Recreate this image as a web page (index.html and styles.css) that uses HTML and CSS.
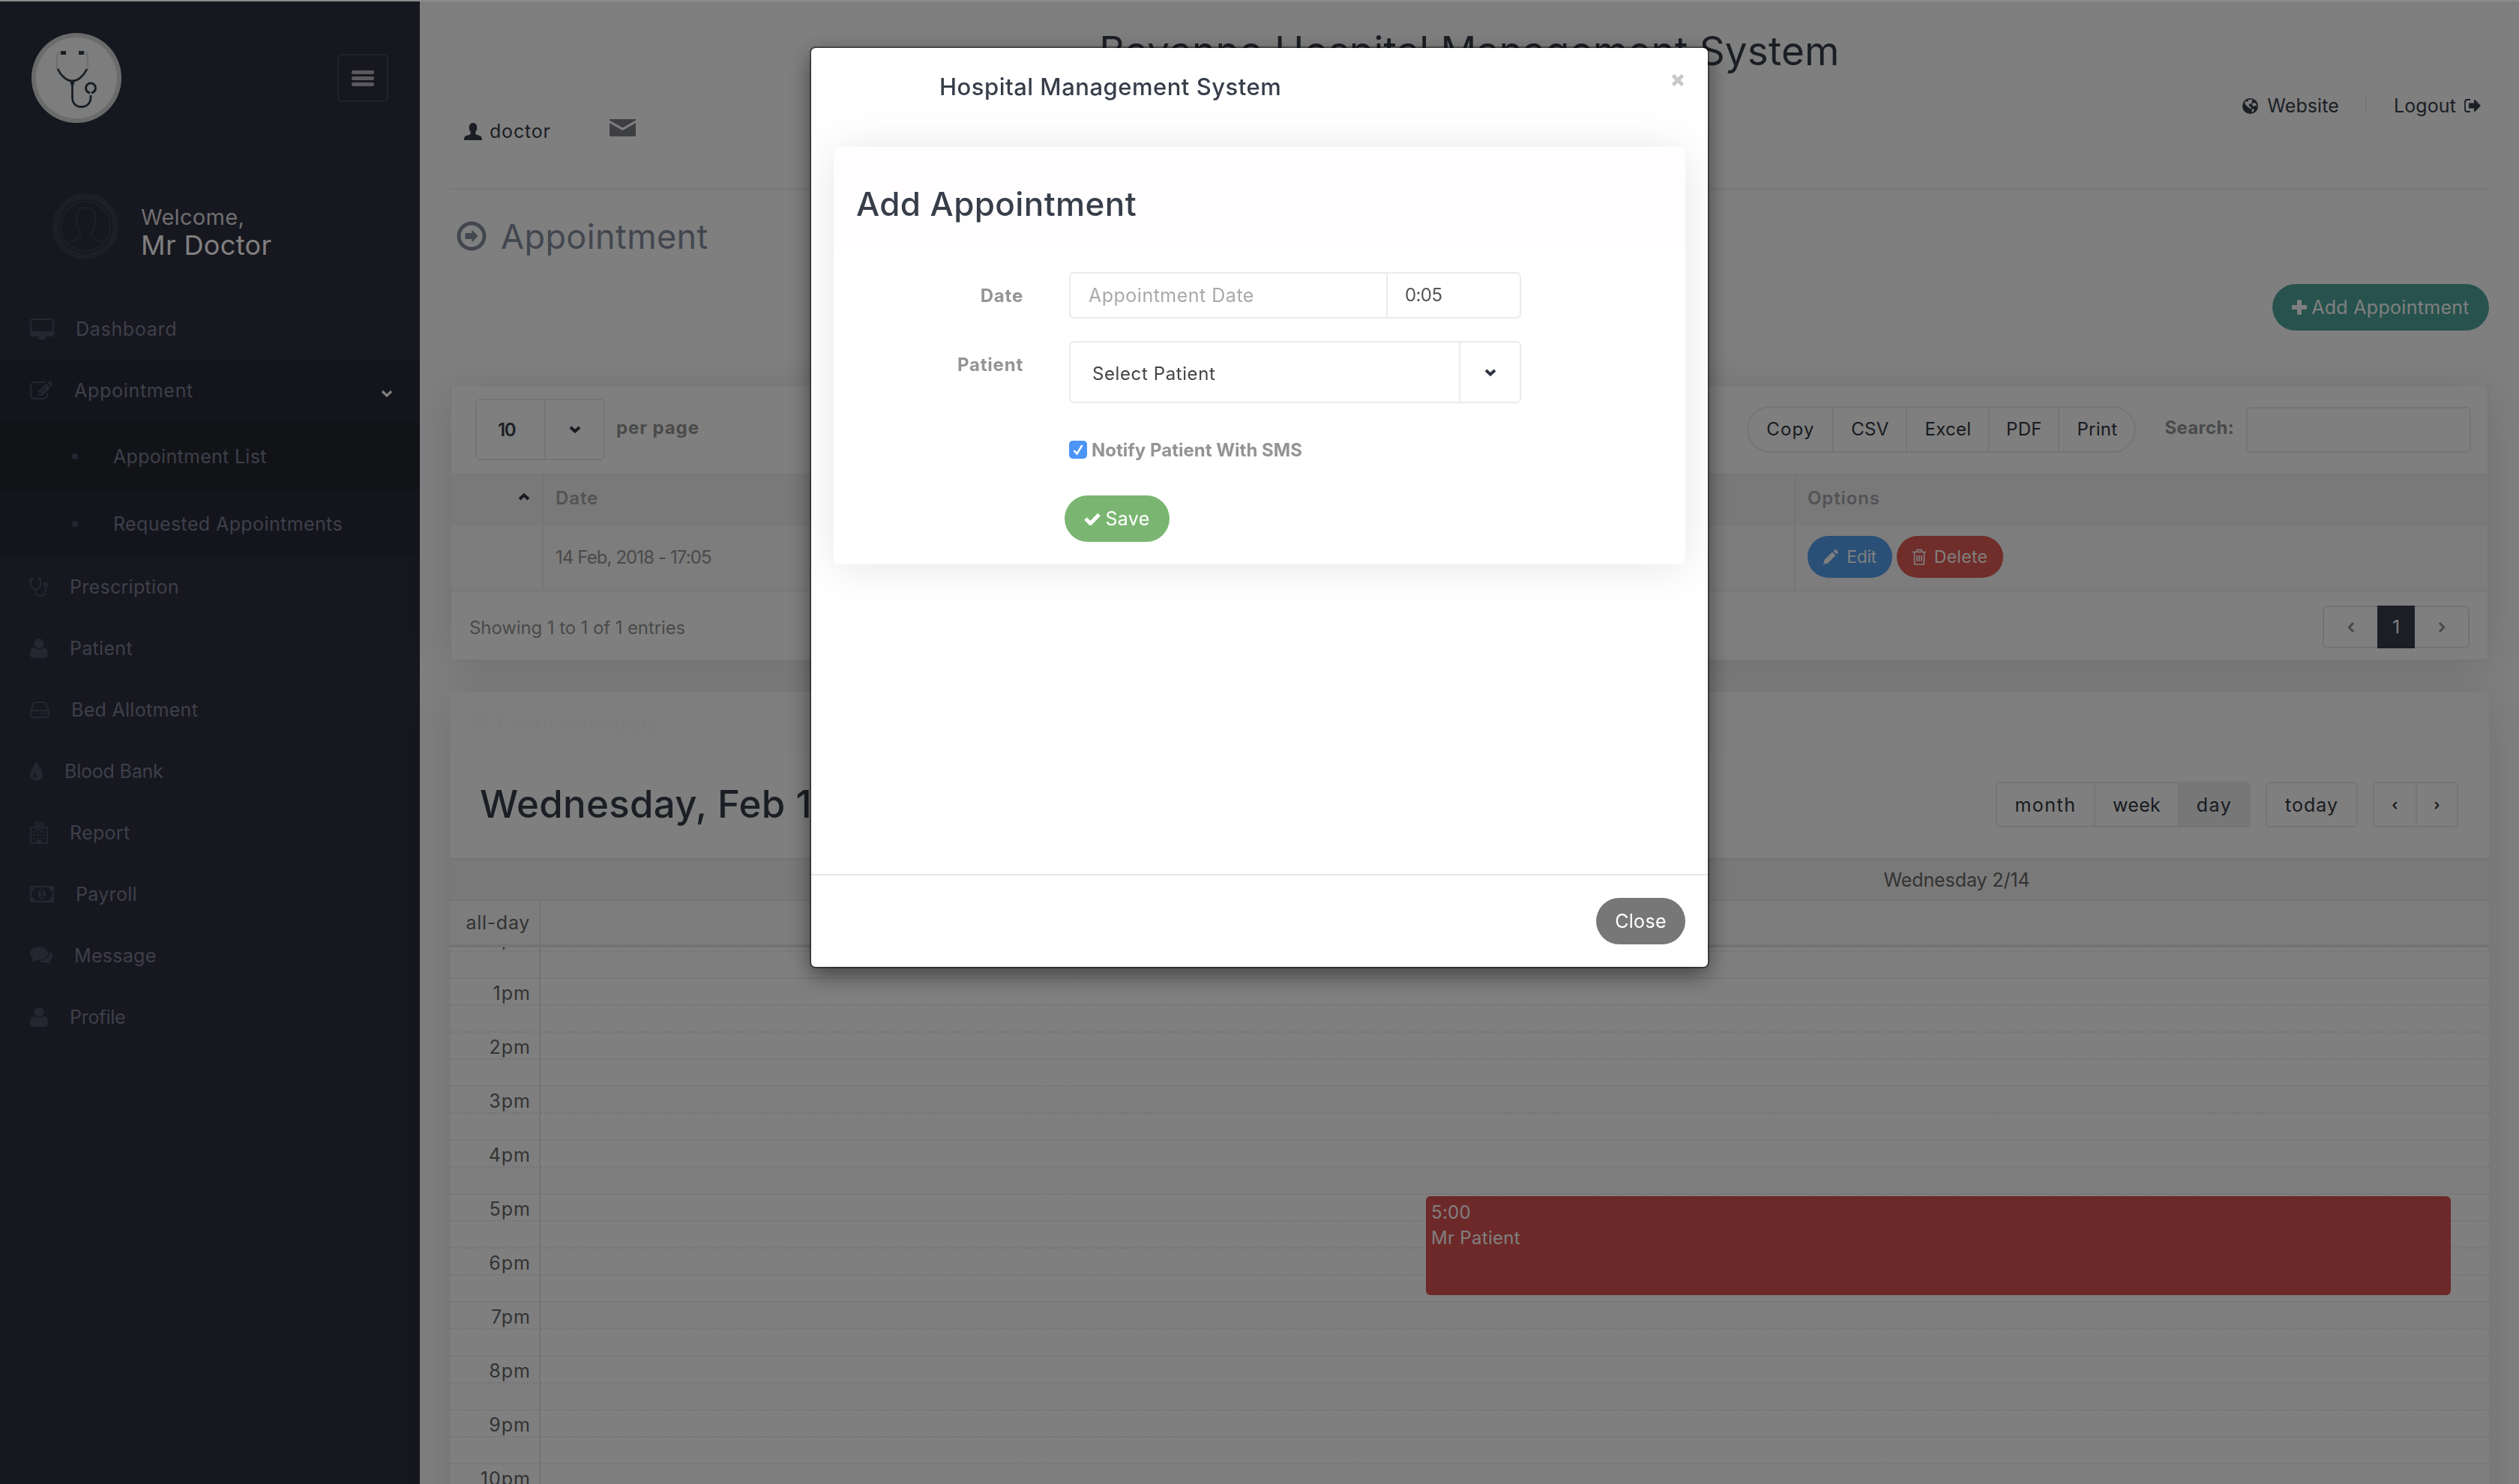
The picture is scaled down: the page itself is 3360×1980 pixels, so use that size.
FILE: index.html
```
<!DOCTYPE html>
<html lang="en">
<head>
 <meta charset="UTF-8">
 <title>Appointment | Bayanno Hospital Management System</title>
 <link rel="stylesheet" href="styles.css">
</head>
<body>
<div class="page">
 <div class="sidebar">
  <div class="logo-env">
   <svg class="logo" width="120" height="120" viewBox="0 0 120 120" fill="none">
    <circle cx="60" cy="60" r="60" fill="#d4d8d6"/>
    <circle cx="60" cy="60" r="54" fill="#fbfbfb"/>
    <path d="M40 26c-4 0-6 3-6 7v15M69 26c4 0 6 3 6 7v15" stroke="#dcdedd" stroke-width="2.4"/>
    <rect x="39" y="24" width="7" height="5" fill="#303f4b"/>
    <rect x="63" y="24" width="7" height="5" fill="#303f4b"/>
    <path d="M35 48c4 9 12 16 19.500 16S70 57 74 48M54.500 64v22c0 8 5 12.500 12 12.500S79 94 79 86v-3" stroke="#303f4b" stroke-width="2.800"/>
    <rect x="52" y="63" width="5" height="6" fill="#303f4b"/>
    <circle cx="79" cy="73.500" r="6.500" stroke="#303f4b" stroke-width="3"/>
    <path d="M79 76v7" stroke="#fbfbfb" stroke-width="1.800"/>
   </svg>
   <div class="sidebar-collapse"><i></i><i></i><i></i></div>
  </div>
  <div class="user-info">
   <svg width="88" height="88" viewBox="0 0 88 88" fill="none" stroke="#3c3c4a">
    <circle cx="44" cy="44" r="40" stroke-width="8"/>
    <circle cx="44" cy="44" r="33" stroke-width="2.500"/>
    <path d="M19 66c8-4 18-4 18-11 0-6-6-10-5-20-1-11 4-16 12-16s14 5 13 16c1 10-5 14-5 20 0 7 9 7 17 11" stroke-width="2.500"/>
   </svg>
   <div class="user-text">
    <span class="welcome">Welcome,</span>
    <strong>Mr Doctor</strong>
   </div>
  </div>
  <ul class="main-menu">
   <li>
    <svg width="32" height="28" viewBox="0 0 32 28"><path fill-rule="evenodd" d="M3 0h26a3 3 0 0 1 3 3v18a3 3 0 0 1-3 3h-9l1 3v1H11v-1l1-3H3a3 3 0 0 1-3-3V3a3 3 0 0 1 3-3zM2 3v14h28V3a1 1 0 0 0-1-1H3a1 1 0 0 0-1 1z"/></svg>
    <span class="wide">Dashboard</span>
   </li>
   <li class="active">
    <svg width="30" height="24" viewBox="0 0 30 24"><path d="M21 1H6a5 5 0 0 0-5 5v12a5 5 0 0 0 5 5h12a5 5 0 0 0 5-5v-2" fill="none" stroke="#4b4c62" stroke-width="2"/><path fill-rule="evenodd" d="M22 3l5 5-10 11h-6v-6zM23.500 2l1.500-1.500a2 2 0 0 1 3 0l1.500 1.500a2 2 0 0 1 0 3L28 6.500zM13 14l-1 1v2.500h3L16 17zM21 7l-6 6 1 1 6-6z"/></svg>
    <span class="wide">Appointment</span>
    <svg class="arrow" width="16" height="10" viewBox="0 0 16 10"><path d="M2 2l6 6 6-6" fill="none" stroke="#fff" stroke-width="3.200"/></svg>
   </li>
   <li class="sub current"><b></b><span>Appointment List</span></li>
   <li class="sub last"><b></b><span>Requested Appointments</span></li>
   <li>
    <svg width="24" height="26" viewBox="0 0 24 26" fill="none" stroke="#4b4c62" stroke-width="2"><path d="M3 2H1v7c0 4 2.500 7 6.500 7S14 13 14 9V2h-2M7.500 16v2c0 5 3 7 6.500 7s7-2 7-7v-6"/><circle cx="21" cy="9.500" r="2"/><circle cx="3" cy="2" r="1"/><circle cx="12" cy="2" r="1"/></svg>
    <span>Prescription</span>
   </li>
   <li>
    <svg width="24" height="26" viewBox="0 0 24 26"><circle cx="12" cy="6.500" r="6.500"/><path d="M5.500 12c3.500 3 9.500 3 13 0 4 0 5.500 4 5.500 9 0 3-2 5-4.500 5h-15C2 26 0 24 0 21c0-5 1.500-9 5.500-9z"/></svg>
    <span>Patient</span>
   </li>
   <li>
    <svg width="26" height="22" viewBox="0 0 26 22"><path d="M1 12L5 2.500Q5.500 1 7 1h12q1.500 0 2 1.500L25 12v7q0 2-2 2H3q-2 0-2-2zh24" fill="none" stroke="#4b4c62" stroke-width="2"/><path d="M1 12h24" stroke="#4b4c62" stroke-width="2"/><circle cx="16.500" cy="16.500" r="1.400"/><circle cx="21" cy="16.500" r="1.400"/></svg>
    <span>Bed Allotment</span>
   </li>
   <li>
    <svg width="17" height="25" viewBox="0 0 17 25"><path fill-rule="evenodd" d="M8.500 0c.8 0 1.200.4 1.500 1 1.500 5 7 9.500 7 15.500a8.500 8.500 0 0 1-17 0C0 10.500 5.500 6 7 1c.3-.6.700-1 1.500-1zM6.500 14c-.5 2-2 3-2 4.500a2.200 2.200 0 0 0 4.400 0c0-1.500-1.900-2.500-2.400-4.500z"/></svg>
    <span class="tight">Blood Bank</span>
   </li>
   <li>
    <svg width="24" height="30" viewBox="0 0 24 30"><path d="M7.500 8H1v21h22V8h-6.500M7.500 1.500h9v9h-9zM10.500 3.500v5M13.500 3.500v5M10.500 6h3" fill="none" stroke="#4b4c62" stroke-width="1.900"/><path d="M9 24h6v5H9zM4 13h2.200v2H4zm4.500 0h2.200v2H8.500zm4.500 0h2.200v2H13zm4.500 0h2.200v2h-2.200zM4 17.300h2.200v2H4zm4.500 0h2.200v2H8.500zm4.500 0h2.200v2H13zm4.500 0h2.200v2h-2.200zM4 21.600h2.200v2H4zm13.500 0h2.200v2h-2.200z"/></svg>
    <span>Report</span>
   </li>
   <li>
    <svg width="32" height="22" viewBox="0 0 32 22"><path fill-rule="evenodd" d="M0 0h32v22H0zM6.500 2A4.500 4.500 0 0 1 2 6.500v9A4.500 4.500 0 0 1 6.500 20h19a4.500 4.500 0 0 1 4.500-4.500v-9A4.500 4.500 0 0 1 25.500 2z"/><ellipse cx="16" cy="11" rx="5.300" ry="7"/><path d="M13.500 8l3-2v8.500M13 15h6.500" fill="none" stroke="#2e2e3e" stroke-width="1.800"/></svg>
    <span>Payroll</span>
   </li>
   <li>
    <svg width="30" height="24" viewBox="0 0 30 24"><path d="M12 0c7 0 12 4 12 9s-5 9-12 9l-3-.3C7 19 5 19.500 2 19.500c0-1 2-2 2-4C1.500 14 0 12 0 9c0-5 5-9 12-9z"/><path d="M26 6c2.500 1.500 4 4 4 6.500 0 3-1.500 5-4 6.500 0 2 2 3 2 4-3 0-5-.5-7-2-4 .6-7 0-9.500-2C20 19.500 26 14 26 9z"/></svg>
    <span>Message</span>
   </li>
   <li>
    <svg width="24" height="26" viewBox="0 0 24 26"><circle cx="12" cy="6.500" r="6.500"/><path d="M5.500 12c3.500 3 9.500 3 13 0 4 0 5.500 4 5.500 9 0 3-2 5-4.500 5h-15C2 26 0 24 0 21c0-5 1.500-9 5.500-9z"/></svg>
    <span class="tight">Profile</span>
   </li>
  </ul>
 </div>

 <div class="main-content">
  <h2 class="system-name">Bayanno Hospital Management System</h2>
  <div class="top-row">
   <div class="profile">
    <svg width="24" height="23" viewBox="0 0 24 23"><path d="M12 0c3.500 0 5.300 2.500 5.300 6 0 3-1 4.500-1.800 6-.5 1.500-.3 3 .8 3.500l5 1.800c2 .7 2.700 2 2.700 5.700H0c0-3.700.7-5 2.700-5.700l5-1.800c1.100-.5 1.300-2 .8-3.500-.8-1.500-1.800-3-1.800-6C6.700 2.500 8.500 0 12 0z"/></svg>
    <span>doctor</span>
    <svg class="mail" width="35" height="23" viewBox="0 0 35 23"><path d="M0 0h35v1.500L17.500 11.500 0 1.500zM0 5l17.500 10L35 5v16.500q0 1.500-1.500 1.500h-32Q0 23 0 21.500z"/></svg>
   </div>
   <div class="links">
    <svg width="21" height="21" viewBox="0 0 21 21"><circle cx="10.500" cy="10.500" r="10.500"/><path d="M8 2.500l3-1 3 1-2 1.500 1.500 1L11 8 8.500 7.500 9.500 11 12 12.500v2L9 13 4.500 9 3 5.500 5 4l2 1zM15 6l3 1 1 4-2.500-1-2.500 1-1-3zM13 14l3 1-1.500 3-2 1z" fill="#fff"/></svg>
    <span>Website</span>
    <i class="sep"></i>
    <span>Logout</span>
    <svg width="22" height="18" viewBox="0 0 22 18"><path d="M8 1H4Q1 1 1 4v10q0 3 3 3h4" fill="none" stroke="#373e4a" stroke-width="1.800"/><path d="M6 5.500h7V1.500Q13.500.5 14.500 1.200L22 9l-7.500 7.800q-1 .7-1.500-.3v-4H6z"/></svg>
   </div>
  </div>
  <h3 class="page-title">
   <svg width="40" height="40" viewBox="0 0 40 40"><circle cx="20" cy="20" r="17" fill="none" stroke="#848d9f" stroke-width="5"/><path d="M11.500 16h9v-4.500l8 8.500-8 8.500V24h-9z"/></svg>
   Appointment
  </h3>
  <div class="add-row">
   <button class="btn btn-add"><svg width="20" height="20" viewBox="0 0 20 20"><path d="M7 1q0-1 1-1h4q1 0 1 1v6h6q1 0 1 1v4q0 1-1 1h-6v6q0 1-1 1H8q-1 0-1-1v-6H1q-1 0-1-1V8q0-1 1-1h6z"/></svg>Add Appointment</button>
  </div>

  <div class="panel table-panel">
   <div class="table-tools">
    <div class="select-box length"><span>10</span><i><svg width="16" height="10" viewBox="0 0 16 10"><path d="M2 2l6 5.500L14 2" fill="none" stroke="#303641" stroke-width="4"/></svg></i></div>
    <label class="per-page">per page</label>
    <div class="export">
     <span>Copy</span><span>CSV</span><span>Excel</span><span>PDF</span><span>Print</span>
    </div>
    <label class="search">Search:</label>
    <input type="text" class="search-input">
   </div>
   <div class="tr thead">
    <div class="sort"><svg width="16" height="10" viewBox="0 0 16 10"><path d="M2 8l6-5.500L14 8" fill="none" stroke="#303641" stroke-width="4"/></svg></div>
    <div>Date</div>
    <div>Options</div>
   </div>
   <div class="tr">
    <div></div>
    <div class="stamp">14 Feb, 2018 - 17:05</div>
    <div class="options">
     <button class="btn btn-sm btn-edit"><svg width="20" height="20" viewBox="0 0 20 20"><path d="M0 20l1.500-6L12 3.500 16.500 8 6 18.500zM13.500 2L15 .6q1-1 2 0L19.400 3q1 1 0 2L18 6.500z"/></svg>Edit</button>
     <button class="btn btn-sm btn-delete"><svg width="18" height="22" viewBox="0 0 18 22"><path d="M0 4.500h18M6 4V1.500h6V4M2.500 5v14q0 2 2 2h9q2 0 2-2V5M6 9v8M9 9v8M12 9v8" fill="none" stroke="#fff" stroke-width="1.700"/></svg>Delete</button>
    </div>
   </div>
   <div class="table-foot">
    <span>Showing 1 to 1 of 1 entries</span>
    <div class="pagination">
     <a><svg width="10" height="16" viewBox="0 0 10 16"><path d="M8 2L2.500 8 8 14" fill="none" stroke="#949494" stroke-width="3"/></svg></a>
     <a class="on">1</a>
     <a><svg width="10" height="16" viewBox="0 0 10 16"><path d="M2 2l5.500 6L2 14" fill="none" stroke="#949494" stroke-width="3"/></svg></a>
    </div>
   </div>
  </div>

  <div class="panel calendar">
   <div class="panel-heading">
    <svg width="24" height="24" viewBox="0 0 24 24"><path d="M1 4h22v19H1zM1 9h22M7 0v5M17 0v5" fill="none" stroke="#f9f9f9" stroke-width="2"/></svg>
    Event Schedule
   </div>
   <div class="cal-toolbar">
    <h2>Wednesday, Feb 14, 2018</h2>
    <div class="cal-group"><span class="w1">month</span><span class="w2">week</span><span class="w3 on">day</span></div>
    <div class="cal-group"><span class="w4">today</span></div>
    <div class="cal-group"><span class="w5">‹</span><span class="w5">›</span></div>
   </div>
   <div class="cal-head"><span>Wednesday 2/14</span></div>
   <div class="all-day"><span>all-day</span></div>
   <div class="slots">
    <div id="slotRows"></div>
    <div class="event">
     <div>5:00</div>
     <div>Mr Patient</div>
    </div>
   </div>
  </div>
 </div>
</div>

<div class="backdrop"></div>
<div class="top-line"></div>

<div class="modal">
 <div class="modal-header">
  <h4>Hospital Management System</h4>
  <svg width="18" height="18" viewBox="0 0 18 18"><path d="M2.500 2.500l13 13M15.500 2.500l-13 13" stroke="#c8c8c8" stroke-width="5" fill="none"/></svg>
 </div>
 <div class="modal-body">
  <div class="panel form-panel">
   <div class="form-title">Add Appointment</div>
   <div class="form-group">
    <label>Date</label>
    <div class="date-time">
     <input type="text" placeholder="Appointment Date">
     <input type="text" class="time" value="0:05">
    </div>
   </div>
   <div class="form-group">
    <label>Patient</label>
    <div class="select-box patient"><span>Select Patient</span><i><svg width="16" height="10" viewBox="0 0 16 10"><path d="M2 2l6 5.500L14 2" fill="none" stroke="#303641" stroke-width="4"/></svg></i></div>
   </div>
   <label class="notify">
    <svg width="24" height="24" viewBox="0 0 24 24"><rect width="24" height="24" rx="5" fill="#4a95f7"/><path d="M6.500 13l4 4.500L17.500 6" fill="none" stroke="#fff" stroke-width="2.500"/></svg>
    Notify Patient With SMS
   </label>
   <button class="btn btn-save"><svg width="22" height="17" viewBox="0 0 22 17"><path d="M2 8l6.500 6.500L20 2.500" fill="none" stroke="#fff" stroke-width="5"/></svg>Save</button>
  </div>
 </div>
 <div class="modal-footer">
  <button class="btn btn-close">Close</button>
 </div>
</div>

<script>
const slotRows = document.getElementById('slotRows');
const hours = ['12pm', '1pm', '2pm', '3pm', '4pm', '5pm', '6pm', '7pm', '8pm', '9pm', '10pm'];

// every hour has a labelled row and an empty half-hour row
hours.forEach(hour => {
    [hour, ''].forEach(label => {
        const row = document.createElement('div');
        row.className = 'slot';
        row.innerHTML = `<span>${label}</span><i></i>`;
        slotRows.appendChild(row);
    });
});
</script>
</body>
</html>
```
FILE: styles.css
```
*{
    margin: 0;
    padding: 0;
    box-sizing: border-box;
}
body{
    width: 3360px;
    height: 1980px;
    overflow: hidden;
    background: #fff;
    font-family: Inter, "Open Sans", sans-serif;
    font-size: 25px;
    letter-spacing: .3px;
    color: #949494;
}
svg{
    display: block;
    flex: none;
}
ul{
    list-style: none;
}
button, input{
    font: inherit;
    letter-spacing: inherit;
    border: 0;
    outline: 0;
}
.page{
    display: flex;
    height: 1980px;
    overflow: hidden;
}

/* sidebar */
.sidebar{
    width: 560px;
    flex: none;
    background: #2e2e3e;
    color: #7d7f95;
}
.logo-env{
    height: 207px;
    border-bottom: 2px solid #313141;
    display: flex;
    justify-content: space-between;
    align-items: flex-start;
    padding: 44px 42px 0 42px;
}
.sidebar-collapse{
    width: 68px;
    height: 64px;
    margin-top: 28px;
    border: 2px solid #454752;
    border-radius: 6px;
    display: flex;
    flex-direction: column;
    align-items: center;
    justify-content: center;
    gap: 3px;
}
.sidebar-collapse i{
    width: 30px;
    height: 5px;
    border-radius: 2px;
    background: #b4b5ba;
}
.user-info{
    height: 191px;
    display: flex;
    align-items: flex-start;
    padding: 51px 0 0 70px;
}
.user-text{
    margin: 15px 0 0 30px;
}
.user-text strong, .welcome{
    display: block;
    font-weight: 400;
}
.welcome{
    font-size: 29px;
    line-height: 34px;
    color: #dcdcde;
}
.user-text strong{
    font-size: 36px;
    line-height: 40px;
    letter-spacing: .4px;
    color: #fff;
}
.main-menu li{
    height: 82px;
    display: flex;
    align-items: center;
    gap: 29px;
    padding-left: 40px;
    fill: #4b4c62;
}
.main-menu .wide{
    letter-spacing: .7px;
}
.main-menu .tight{
    letter-spacing: -.2px;
}
.main-menu .active{
    background: #292a38;
}
.main-menu .arrow{
    margin: 8px 36px 0 auto;
}
.main-menu .sub{
    height: 93px;
    padding-left: 96px;
    gap: 47px;
    background: #25272e;
}
.main-menu .last{
    height: 87px;
    letter-spacing: .4px;
    background: #292a38;
}
.sub b{
    width: 8px;
    height: 8px;
    border-radius: 50%;
    background: #4b4c62;
}

/* page header */
.main-content{
    flex: 1;
    padding: 38px 40px 0;
}
.system-name{
    font-size: 53px;
    font-weight: 400;
    line-height: 60px;
    letter-spacing: .2px;
    text-align: center;
    color: #373e4a;
}
.top-row{
    height: 155px;
    border-bottom: 2px solid #eee;
    display: flex;
    justify-content: space-between;
    color: #373e4a;
    fill: #373e4a;
}
.profile, .links{
    display: flex;
    align-items: center;
    height: 40px;
}
.profile{
    margin: 57px 0 0 19px;
    gap: 10px;
    letter-spacing: .8px;
}
.profile .mail{
    margin: -10px 0 0 68px;
    fill: #7c7e84;
}
.links{
    margin: 23px 11px 0 0;
    letter-spacing: .1px;
}
.links span{
    margin: 0 11px 0 12px;
}
.links .sep{
    width: 2px;
    height: 24px;
    margin: -5px 24px 0 24px;
    background: #eee;
}
.page-title{
    height: 126px;
    display: flex;
    align-items: center;
    gap: 19px;
    padding: 0 0 2px 9px;
    font-size: 45px;
    font-weight: 400;
    letter-spacing: .4px;
    color: #848d9f;
    fill: #848d9f;
}
.add-row{
    display: flex;
    justify-content: flex-end;
    margin-bottom: 74px;
}
.btn{
    height: 62px;
    border-radius: 31px;
    display: flex;
    align-items: center;
    justify-content: center;
    color: #fff;
    fill: #fff;
}
.btn-add{
    width: 289px;
    gap: 6px;
    background: #4ea49c;
}

/* panels */
.panel{
    background: #fff;
    border-radius: 6px;
    box-shadow: 0 6px 60px rgba(0,0,0,.13);
}
.table-panel{
    height: 367px;
    border: solid #eee;
    border-width: 0 2px 2px;
}
.table-tools{
    height: 116px;
    display: flex;
    align-items: center;
    padding-left: 32px;
}
.select-box{
    border: 2px solid #ebebeb;
    border-radius: 6px;
    display: flex;
    align-items: center;
    color: #373e4a;
}
.select-box i{
    height: 100%;
    border-left: 2px solid #ebebeb;
    margin-left: auto;
    display: flex;
    align-items: center;
    justify-content: center;
}
.length{
    width: 173px;
    height: 82px;
    font-weight: 600;
    font-size: 24px;
}
.length span{
    width: 90px;
    padding-left: 28px;
    letter-spacing: -1.500px;
}
.length i{
    width: 79px;
}
.per-page, .search{
    font-size: 24px;
    font-weight: 700;
    margin-top: -5px;
}
.per-page{
    margin-left: 15px;
    letter-spacing: .9px;
}
.export{
    display: flex;
    width: 519px;
    height: 62px;
    margin-left: auto;
    border: 2px solid #ebebeb;
    border-radius: 31px;
    font-size: 24px;
    color: #303641;
}
.export span{
    display: flex;
    align-items: center;
    justify-content: center;
    width: 98px;
    padding-bottom: 1px;
}
.export span + span{
    border-left: 2px solid #ebebeb;
}
.export span:nth-child(1){ width: 112px; letter-spacing: 1.200px; }
.export span:nth-child(3){ width: 110px; }
.export span:nth-child(4){ width: 93px; }
.export span:nth-child(5){ width: 102px; }
.search{
    margin-left: 38px;
}
.search-input{
    width: 300px;
    height: 61px;
    margin: 0 22px 0 16px;
    border: 2px solid #ebebeb;
    border-radius: 6px;
}
.tr{
    display: grid;
    grid-template-columns: 121px 1670px 1fr;
    height: 89px;
    border-bottom: 2px solid #eee;
    background: #fafafa;
    font-size: 24px;
}
.tr > div{
    display: flex;
    align-items: center;
    padding-left: 16px;
}
.tr > div + div{
    border-left: 2px solid #ebebeb;
}
.thead{
    height: 69px;
    background: #f3f3f4;
    font-weight: 600;
    letter-spacing: .9px;
    color: #a6a7aa;
}
.tr .sort{
    justify-content: flex-end;
    padding: 0 16px 4px 0;
}
.tr .stamp{
    letter-spacing: -.9px;
}
.options{
    gap: 6px;
    padding-bottom: 1px;
}
.btn-sm{
    height: 56px;
    border-radius: 28px;
    font-size: 23px;
}
.btn-edit{
    width: 113px;
    gap: 11px;
    letter-spacing: -.4px;
    background: #54a0ee;
}
.btn-delete{
    width: 142px;
    gap: 11px;
    background: #e05a54;
}
.table-foot{
    height: 91px;
    display: flex;
    align-items: center;
    justify-content: space-between;
    padding: 6px 24px 0;
    font-size: 24px;
    letter-spacing: -.1px;
}
.pagination{
    display: flex;
    width: 196px;
    height: 57px;
    margin-top: -2px;
    border: 2px solid #e4e4e4;
    border-radius: 6px;
}
.pagination a{
    flex: 1;
    display: flex;
    align-items: center;
    justify-content: center;
}
.pagination .on{
    flex: none;
    width: 50px;
    margin: -2px 0;
    background: #373e4a;
    color: #fff;
}

/* calendar */
.calendar{
    margin-top: 41px;
    height: 1200px;
}
.panel-heading{
    height: 79px;
    display: flex;
    align-items: center;
    gap: 10px;
    padding: 4px 0 0 28px;
    background: #fdfdfd;
    font-size: 29px;
    color: #f9f9f9;
}
.cal-toolbar{
    height: 143px;
    display: flex;
    align-items: center;
    padding-right: 41px;
}
.cal-toolbar h2{
    margin: -3px auto 0 40px;
    font-size: 51px;
    font-weight: 500;
    letter-spacing: .3px;
    color: #373e4a;
}
.cal-group{
    display: flex;
    height: 61px;
    margin-left: 20px;
    border: 2px solid #ebebeb;
    border-radius: 6px;
    color: #303641;
}
.cal-group span{
    display: flex;
    align-items: center;
    justify-content: center;
}
.cal-group span + span{
    border-left: 2px solid #ebebeb;
}
.cal-group .on{
    background: #efeff0;
}
.w1{ width: 129px; letter-spacing: 1.500px; }
.w2{ width: 112px; }
.w3{ width: 95px; letter-spacing: 1.500px; }
.w4{ width: 119px; letter-spacing: 1px; }
.w5{ width: 55px; font-weight: 600; font-size: 20px; }
.cal-head{
    height: 57px;
    border-top: 3px solid #ebebeb;
    border-bottom: 2px solid #ebebeb;
    background: #f2f2f3;
    color: #666;
    display: flex;
    justify-content: flex-end;
}
.cal-head span{
    width: 1420px;
    line-height: 53px;
    letter-spacing: -.1px;
    text-align: center;
}
.all-day{
    height: 62px;
    background: #fafafa;
    border-bottom: 4px solid #e6e6e6;
    color: #666;
}
.all-day span{
    display: block;
    width: 121px;
    height: 58px;
    line-height: 59px;
    padding-right: 12px;
    text-align: right;
    letter-spacing: .7px;
    border-right: 2px solid #e8e8e8;
}
.slots{
    position: relative;
    height: 760px;
    overflow: hidden;
}
#slotRows{
    margin-top: -32px;
}
.slot{
    display: flex;
    height: 36px;
}
.slot span{
    width: 121px;
    line-height: 38px;
    padding-right: 11px;
    text-align: right;
    letter-spacing: 1px;
    color: #666;
    border-top: 2px dotted #e6e6e6;
    border-right: 2px solid #e8e8e8;
}
.slot i{
    flex: 1;
    border-top: 2px dotted #e6e6e6;
}
.event{
    position: absolute;
    left: 1302px;
    top: 332px;
    width: 1367px;
    height: 132px;
    padding: 5px 7px;
    border-radius: 6px;
    background: #da5252;
    font-size: 24px;
    line-height: 34px;
    color: #fff;
}

/* modal */
.backdrop{
    position: fixed;
    inset: 0;
    background: rgba(0,0,0,.5);
}
.top-line{
    position: fixed;
    left: 0;
    right: 0;
    top: 0;
    height: 2px;
    background: #8a8c8c;
}
.modal{
    position: fixed;
    left: 1082px;
    top: 64px;
    width: 1196px;
    height: 1226px;
    border-radius: 6px;
    background: #fff;
    box-shadow: 0 0 0 2px rgba(0,0,0,.4), 0 10px 30px rgba(0,0,0,.5);
    display: flex;
    flex-direction: column;
}
.modal-header{
    height: 132px;
    display: flex;
    justify-content: space-between;
    padding: 34px 31px 0 171px;
}
.modal-header h4{
    font-size: 31px;
    font-weight: 500;
    line-height: 36px;
    letter-spacing: .5px;
    color: #373e4a;
}
.modal-body{
    flex: 1;
    padding: 0 30px;
}
.form-panel{
    height: 557px;
    box-shadow: 0 4px 60px rgba(0,0,0,.1);
}
.form-title{
    height: 136px;
    margin-bottom: 31px;
    padding: 51px 30px 0;
    background: #fffdfe;
    border-radius: 6px 6px 0 0;
    font-size: 44px;
    font-weight: 500;
    line-height: 50px;
    letter-spacing: .4px;
    color: #373e4a;
}
.form-group{
    display: flex;
    margin-bottom: 30px;
    height: 62px;
}
.form-group label{
    width: 253px;
    margin-right: 61px;
    text-align: right;
    font-size: 24px;
    font-weight: 700;
    line-height: 63px;
    letter-spacing: .8px;
}
.date-time{
    display: flex;
    width: 603px;
    border: 2px solid #ebebeb;
    border-radius: 6px;
    color: #555;
}
.date-time input{
    width: 421px;
    padding: 0 0 1px 24px;
    font-size: 25px;
    letter-spacing: .5px;
    background: none;
}
.date-time input::placeholder{
    color: #aaa;
}
.date-time .time{
    width: 178px;
    padding-left: 23px;
    border-left: 2px solid #ebebeb;
    font-size: 24px;
    letter-spacing: -.6px;
    color: #555;
}
.patient{
    width: 603px;
    height: 83px;
    color: #444;
    font-size: 24px;
}
.patient span{
    padding: 3px 0 0 29px;
    letter-spacing: .6px;
}
.patient i{
    width: 81px;
}
.notify{
    display: flex;
    align-items: center;
    gap: 6px;
    height: 30px;
    margin: 68px 0 0 314px;
    font-size: 24px;
    font-weight: 700;
    letter-spacing: 0;
}
.btn-save{
    width: 140px;
    margin: 46px 0 0 308px;
    gap: 6px;
    background: #7ab671;
}
.modal-footer{
    height: 124px;
    border-top: 2px solid #e5e5e5;
    display: flex;
    justify-content: flex-end;
    padding: 30px 30px 0 0;
}
.btn-close{
    width: 119px;
    background: #777;
}
```
